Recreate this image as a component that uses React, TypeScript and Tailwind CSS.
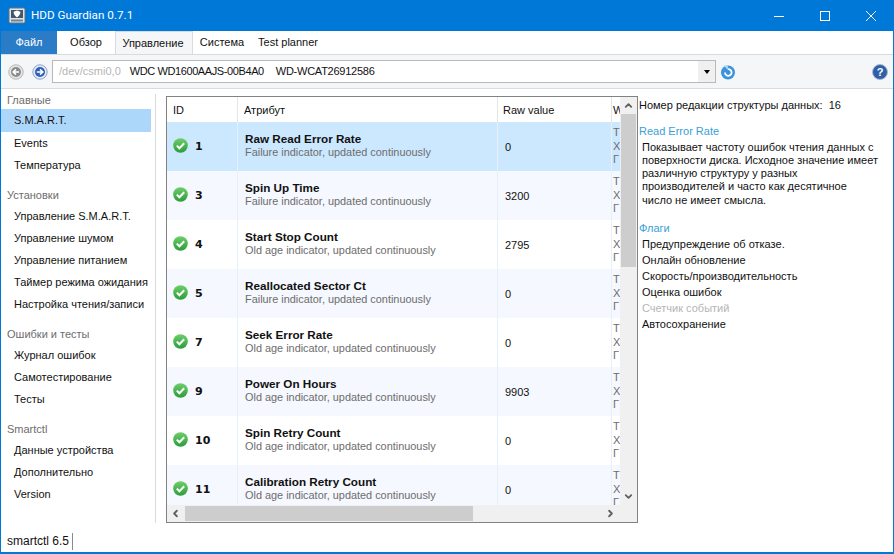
import { ChevronLeft, ChevronRight, ChevronUp, ChevronDown } from "lucide-react";

const groups = [
  { title: "Главные", items: ["S.M.A.R.T.", "Events", "Температура"], gap: "mt-[3px]" },
  { title: "Установки", items: ["Управление S.M.A.R.T.", "Управление шумом", "Управление питанием", "Таймер режима ожидания", "Настройка чтения/записи"], gap: "mt-[4px]" },
  { title: "Ошибки и тесты", items: ["Журнал ошибок", "Самотестирование", "Тесты"], gap: "mt-[4px]" },
  { title: "Smartctl", items: ["Данные устройства", "Дополнительно", "Version"], gap: "mt-[4px]" },
];

const fail = "Failure indicator, updated continuously";
const old = "Old age indicator, updated continuously";
const rows = [
  { id: 1, name: "Raw Read Error Rate", sub: fail, raw: "0" },
  { id: 3, name: "Spin Up Time", sub: fail, raw: "3200" },
  { id: 4, name: "Start Stop Count", sub: old, raw: "2795" },
  { id: 5, name: "Reallocated Sector Ct", sub: fail, raw: "0" },
  { id: 7, name: "Seek Error Rate", sub: old, raw: "0" },
  { id: 9, name: "Power On Hours", sub: old, raw: "9903" },
  { id: 10, name: "Spin Retry Count", sub: old, raw: "0" },
  { id: 11, name: "Calibration Retry Count", sub: old, raw: "0" },
];

const flags = [
  { t: "Предупреждение об отказе.", off: false },
  { t: "Онлайн обновление", off: false },
  { t: "Скорость/производительность", off: false },
  { t: "Оценка ошибок", off: false },
  { t: "Счетчик событий", off: true },
  { t: "Автосохранение", off: false },
];

function Check() {
  return (
    <svg width="15" height="15" viewBox="0 0 15 15" className="shrink-0 -mt-[2px]">
      <defs>
        <linearGradient id="ok" x1="0" y1="0" x2="0" y2="1">
          <stop offset="0" stopColor="#6fcf6a" />
          <stop offset="1" stopColor="#2a9c3a" />
        </linearGradient>
      </defs>
      <circle cx="7.5" cy="7.5" r="7.3" fill="url(#ok)" />
      <path d="M3.8 7.6 L6.4 10.2 L11.2 5.2" fill="none" stroke="#fff" strokeWidth="2" />
    </svg>
  );
}

function NavButton({ active }: { active: boolean }) {
  return (
    <svg width="16" height="16" viewBox="0 0 16 16">
      <circle cx="8" cy="8" r="7.2" fill={active ? "#e3e9f5" : "#e6e6e6"} stroke={active ? "#8fa3c9" : "#b5b5b5"} />
      <circle cx="8" cy="8" r="5" fill={active ? "#2f5fb5" : "#8a8a8a"} />
      {active ? (
        <path d="M4.8 8 H10.5 M8 5.3 L10.8 8 L8 10.7" fill="none" stroke="#fff" strokeWidth="1.6" />
      ) : (
        <path d="M11.2 8 H5.5 M8 5.3 L5.2 8 L8 10.7" fill="none" stroke="#fff" strokeWidth="1.6" />
      )}
    </svg>
  );
}

export default function App() {
  return (
    <div className="w-[894px] h-[554px] flex flex-col overflow-hidden bg-white border border-[#0078d7] border-t-0 text-[11px] text-[#111] font-['Liberation_Sans',sans-serif]">
      {/* title bar */}
      <div className="h-[31px] shrink-0 -mx-px bg-[#0078d7] text-white flex items-center">
        <svg width="18" height="18" viewBox="0 0 18 18" className="ml-[8px]">
          <rect x="1" y="1" width="16" height="15" rx="1.5" fill="#dfe4e8" stroke="#66727c" />
          <rect x="3" y="3" width="12" height="8" fill="#44586c" />
          <path d="M9 3.6 L12.4 4.8 C12.4 7.4 11 9.2 9 10.4 C7 9.2 5.6 7.4 5.6 4.8 Z" fill="#fff" />
          <rect x="3" y="12.5" width="12" height="2" fill="#77838e" />
        </svg>
        <span className="ml-[5px] text-[11.7px] font-['Roboto',sans-serif]">HDD Guardian 0.7.1</span>
        <div className="ml-auto flex items-center">
          <div className="w-[46px] flex justify-center">
            <svg width="10" height="10" viewBox="0 0 10 10"><path d="M0 5.5 H10" stroke="#fff" strokeWidth="1" /></svg>
          </div>
          <div className="w-[46px] flex justify-center">
            <svg width="10" height="10" viewBox="0 0 10 10"><rect x="0.5" y="0.5" width="9" height="9" fill="none" stroke="#fff" strokeWidth="1" /></svg>
          </div>
          <div className="w-[46px] flex justify-center">
            <svg width="10" height="10" viewBox="0 0 10 10"><path d="M0 0 L10 10 M10 0 L0 10" stroke="#fff" strokeWidth="1" /></svg>
          </div>
        </div>
      </div>

      {/* menu tabs */}
      <div className="h-[23px] shrink-0 flex items-stretch">
        <div className="w-[56px] bg-[#2a7cc7] text-white flex items-center justify-center">Файл</div>
        <div className="w-[58px] flex items-center justify-center">Обзор</div>
        <div className="w-[78px] pr-[2px] flex items-center justify-center bg-[#f5f6f7] border border-b-0 border-[#dadbdc]">Управление</div>
        <div className="w-[56px] pl-[2px] flex items-center justify-center">Система</div>
        <div className="w-[78px] flex items-center justify-center">Test planner</div>
      </div>

      {/* address bar */}
      <div className="h-[35px] shrink-0 flex items-center bg-[#f5f6f7] border-y border-[#dadbdc]">
        <div className="ml-[7px] flex gap-[8px]">
          <NavButton active={false} />
          <NavButton active={true} />
        </div>
        <div className="ml-[4px] w-[664px] h-[23px] bg-white border border-[#b9b9b9] flex items-center pl-[6px]">
          <span className="text-[#b5b5b5] whitespace-pre">/dev/csmi0,0</span>
          <span className="ml-[9px] tracking-[-0.4px]">WDC WD1600AAJS-00B4A0</span>
          <span className="ml-[12px] tracking-[-0.25px]">WD-WCAT26912586</span>
          <div className="ml-auto w-[17px] h-full bg-[#f0f0f0] flex items-center justify-center">
            <div className="w-0 h-0 border-x-[3.5px] border-x-transparent border-t-[4px] border-t-black" />
          </div>
        </div>
        <svg width="16" height="16" viewBox="0 0 16 16" className="ml-[4px]">
          <circle cx="8" cy="8.5" r="7" fill="#3a93dc" />
          <path d="M5 8.5 A3.3 3.3 0 1 0 8 5.2" fill="none" stroke="#fff" strokeWidth="1.8" />
          <path d="M3.5 1.5 H8 V6 Z" fill="#a9d3f2" />
        </svg>
        <svg width="16" height="16" viewBox="0 0 16 16" className="ml-auto mr-[5px]">
          <circle cx="8" cy="8" r="7.5" fill="#2f5fa8" stroke="#aab8cf" />
          <text x="8" y="12" textAnchor="middle" fontSize="11" fontWeight="700" fill="#fff" fontFamily="Liberation Sans">?</text>
        </svg>
      </div>

      {/* body */}
      <div className="flex-1 min-h-0 flex">
        {/* sidebar */}
        <div className="w-[155px] shrink-0 border-r border-[#dadbdc] mt-[5px] mb-[1px]">
          {groups.map((g) => (
            <div key={g.title} className="mb-[13px]">
              <div className="h-[12px] pl-[6px] flex items-center text-[#6d6d6d]">{g.title}</div>
              <div className={`${g.gap} flex flex-col`}>
                {g.items.map((it) => (
                  <div key={it} className={`pl-[13px] mr-[4px] flex items-center whitespace-nowrap ${it === "S.M.A.R.T." ? "h-[23px] bg-[#add6fb]" : "h-[22px]"}`}>
                    {it}
                  </div>
                ))}
              </div>
            </div>
          ))}
        </div>

        {/* table */}
        <div className="ml-[10px] mt-[7px] w-[472px] h-[427px] shrink-0 border border-[#828282] flex flex-col overflow-hidden">
          <div className="flex-1 min-h-0 flex">
            <div className="flex-1 min-w-0 overflow-hidden">
              <div className="h-[25px] flex">
                <div className="w-[71px] shrink-0 pl-[6px] pt-[1px] flex items-center border-r border-[#e5e5e5]">ID</div>
                <div className="w-[260px] shrink-0 pl-[6px] pt-[1px] flex items-center border-r border-[#e5e5e5]">Атрибут</div>
                <div className="w-[114px] shrink-0 pl-[5px] pt-[1px] flex items-center border-r border-[#e5e5e5]">Raw value</div>
                <div className="flex-1 min-w-0 overflow-hidden pl-[1px] pt-[1px] flex items-center">W</div>
              </div>
              {rows.map((r, i) => (
                <div key={r.id} className={`h-[49px] flex ${i === 0 ? "bg-[#cce8ff]" : i % 2 === 1 ? "bg-[#f5f8fe]" : "bg-white"}`}>
                  <div className="w-[71px] shrink-0 pl-[6px] flex items-center gap-[7px] border-r border-[#e6f0fb]">
                    <Check />
                    <span className="font-['DejaVu_Sans',sans-serif] font-bold text-[11px] mt-[1px]">{r.id}</span>
                  </div>
                  <div className="w-[260px] shrink-0 pl-[7px] pt-[11px] flex flex-col border-r border-[#e6f0fb]">
                    <span className="font-bold text-[11.7px] leading-[12px]">{r.name}</span>
                    <span className="text-[#6d6d6d] text-[10.9px] leading-[13px] mt-[1px]">{r.sub}</span>
                  </div>
                  <div className="w-[114px] shrink-0 pl-[7px] pt-[2px] flex items-center border-r border-[#e6f0fb]">{r.raw}</div>
                  <div className="flex-1 min-w-0 pl-[1px] flex flex-col justify-center leading-[13.5px] text-[#6d6d6d] overflow-hidden">
                    <span>Т</span>
                    <span>Х</span>
                    <span>Г</span>
                  </div>
                </div>
              ))}
            </div>
            <div className="w-[17px] shrink-0 bg-[#f0f0f0] flex flex-col items-center">
              <div className="h-[17px] flex items-center justify-center"><ChevronUp size={11} strokeWidth={4} className="text-[#606060]" /></div>
              <div className="w-[15px] h-[153px] bg-[#cdcdcd]" />
              <div className="mt-auto h-[17px] flex items-center justify-center"><ChevronDown size={11} strokeWidth={4} className="text-[#606060]" /></div>
            </div>
          </div>
          <div className="h-[17px] shrink-0 bg-[#f0f0f0] flex items-center">
            <div className="w-[17px] flex justify-center"><ChevronLeft size={11} strokeWidth={4} className="text-[#606060]" /></div>
            <div className="w-[288px] h-[15px] ml-[1px] bg-[#cdcdcd]" />
            <div className="ml-auto w-[32px] flex justify-start"><ChevronRight size={11} strokeWidth={4} className="text-[#606060]" /></div>
          </div>
        </div>

        {/* details */}
        <div className="flex-1 min-w-0 pl-[1px] pt-[10px]">
          <div className="h-[13px] flex items-center whitespace-nowrap">Номер редакции структуры данных:&nbsp; 16</div>
          <div className="mt-[11px] text-[#3aa0d8]">Read Error Rate</div>
          <div className="mt-[1px] pl-[3px] leading-[13.3px] whitespace-nowrap">
            <div>Показывает частоту ошибок чтения данных с</div>
            <div>поверхности диска. Исходное значение имеет</div>
            <div>различную структуру у разных</div>
            <div>производителей и часто как десятичное</div>
            <div>число не имеет смысла.</div>
          </div>
          <div className="mt-[13px] text-[#3aa0d8]">Флаги</div>
          <div className="pl-[3px] flex flex-col">
            {flags.map((f) => (
              <div key={f.t} className={`h-[16px] flex items-center whitespace-nowrap ${f.off ? "text-[#b5b5b5]" : ""}`}>{f.t}</div>
            ))}
          </div>
        </div>
      </div>

      {/* status bar */}
      <div className="h-[29px] shrink-0 flex items-center pl-[6px] pt-[7px] border-b border-[#0078d7]">
        <span className="text-[12px] pr-[3px] h-[17px] leading-[17px] border-r border-[#8a8a8a]">smartctl 6.5</span>
      </div>
    </div>
  );
}
